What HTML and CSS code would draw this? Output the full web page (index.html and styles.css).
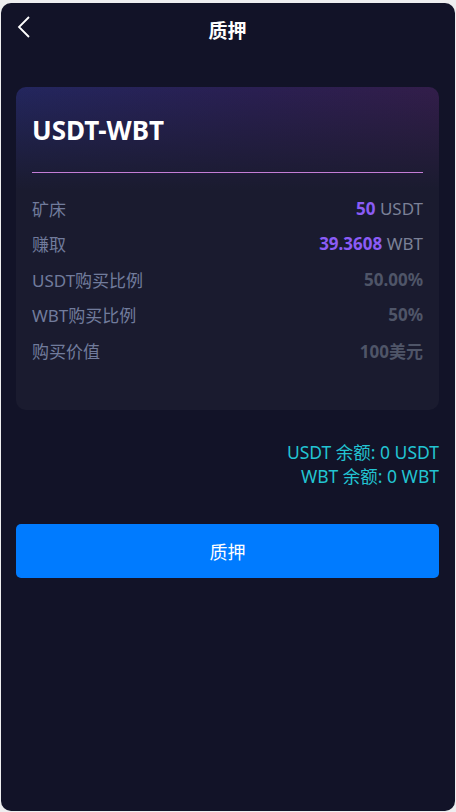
FILE: index.html
```html
<!DOCTYPE html>
<html lang="zh-CN">
<head>
<meta charset="utf-8">
<title>质押</title>
<link rel="stylesheet" href="styles.css">
</head>
<body>
<div class="app">
  <header class="topbar">
    <span class="back">
      <svg width="14" height="22" viewBox="0 0 14 22"><polyline points="12,1 2,11 12,21" fill="none" stroke="#ffffff" stroke-width="1.8" stroke-linejoin="miter"/></svg>
    </span>
    <h1 class="title">质押</h1>
  </header>

  <section class="card">
    <div class="card-title">USDT-WBT</div>
    <div class="divider"></div>
    <div class="rows">
      <div class="row"><span class="label">矿床</span><span class="value"><b class="hl">50</b> <span class="unit">USDT</span></span></div>
      <div class="row"><span class="label">赚取</span><span class="value"><b class="hl">39.3608</b> <span class="unit">WBT</span></span></div>
      <div class="row"><span class="label">USDT购买比例</span><span class="value muted">50.00%</span></div>
      <div class="row"><span class="label">WBT购买比例</span><span class="value muted">50%</span></div>
      <div class="row"><span class="label">购买价值</span><span class="value muted">100美元</span></div>
    </div>
  </section>

  <div class="balances">
    <div>USDT 余额: 0 USDT</div>
    <div>WBT 余额: 0 WBT</div>
  </div>

  <button class="submit">质押</button>
</div>
</body>
</html>
```

FILE: styles.css
```css
html, body {
  margin: 0;
  padding: 0;
  background: #eeeef0;
}
body {
  font-family: "Noto Sans", "Noto Sans CJK SC", sans-serif;
  padding: 3px 1px 1px 1px;
}
.app {
  height: 808px;
  background: #121328;
  border-radius: 10px;
  padding: 0 16px 0 15px;
  box-sizing: border-box;
  overflow: hidden;
}
.topbar {
  height: 56px;
  display: flex;
  align-items: center;
  justify-content: center;
  position: relative;
}
.back {
  position: absolute;
  left: 1px;
  top: 13px;
  display: block;
  width: 14px;
  height: 22px;
}
.back svg { display: block; }
.title {
  margin: 0;
  font-size: 19px;
  font-weight: 700;
  color: #ffffff;
  line-height: 24px;
}
.card {
  margin-top: 28px;
  border-radius: 10px;
  background:
    linear-gradient(180deg, rgba(26,27,47,0) 0%, #1a1b2f 32%),
    linear-gradient(100deg, #23265e 0%, #2a1f52 50%, #351d48 100%);
  padding: 27px 16px 42px 16px;
}
.card-title {
  font-size: 26px;
  font-weight: 700;
  color: #ffffff;
  line-height: 32px;
}
.divider {
  margin-top: 26px;
  height: 1px;
  background: #c47dd6;
}
.rows {
  margin-top: 17.5px;
}
.row {
  display: flex;
  justify-content: space-between;
  align-items: center;
  height: 35.5px;
  font-size: 17px;
}
.label {
  color: #717b9c;
}
.value {
  color: #7b8197;
}
.hl {
  color: #8b5cf6;
  font-weight: 700;
}
.unit {
  color: #7b8197;
}
.muted {
  color: #4f5568;
  font-weight: 700;
}
.balances {
  margin-top: 30px;
  text-align: right;
  color: #22c4d2;
  font-size: 17.5px;
  line-height: 24px;
}
.submit {
  display: block;
  width: 100%;
  margin-top: 36px;
  height: 54px;
  border: 0;
  border-radius: 5px;
  background: #007bff;
  color: #ffffff;
  font-family: "Noto Sans", "Noto Sans CJK SC", sans-serif;
  font-size: 18px;
}
```
